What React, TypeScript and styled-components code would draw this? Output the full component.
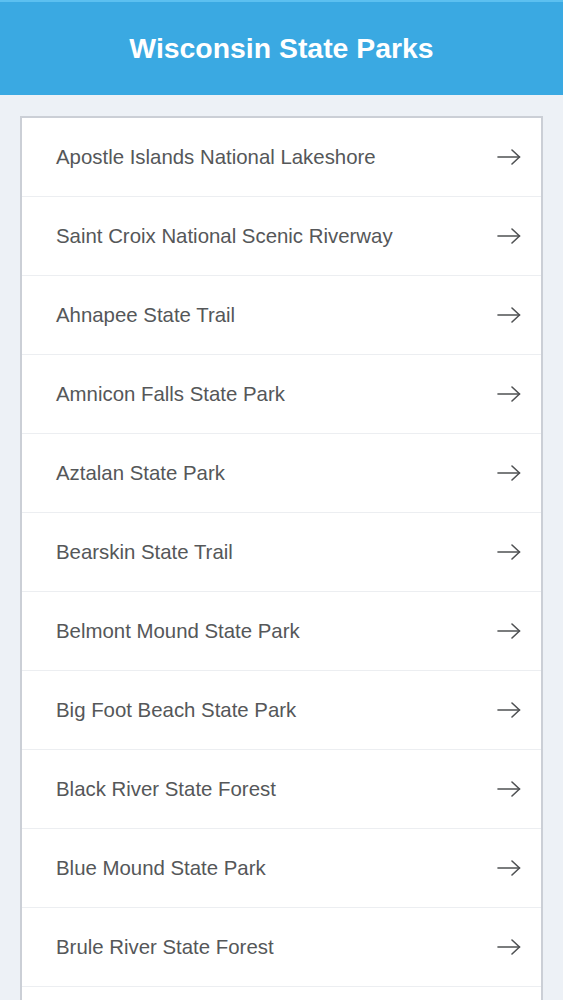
import React from 'react';
import styled, { createGlobalStyle } from 'styled-components';

const GlobalStyle = createGlobalStyle`
  html, body {
    margin: 0;
    padding: 0;
    background: #edf1f6;
    font-family: "Liberation Sans", Arial, Helvetica, sans-serif;
  }
`;

const Page = styled.div`
  height: 1000px;
  overflow: hidden;
  background: #edf1f6;
`;

const Header = styled.header`
  height: 95px;
  background: #3aa9e2;
  border-top: 2px solid #5cc0f0;
  box-sizing: border-box;
  display: flex;
  align-items: center;
  justify-content: center;
`;

const Title = styled.h1`
  margin: 0;
  color: #ffffff;
  font-size: 28.4px;
  font-weight: 700;
`;

const Card = styled.ul`
  list-style: none;
  margin: 21px 20px 0 20px;
  padding: 0 0 60px 0;
  background: #ffffff;
  border: 2px solid #cbcfd6;
  border-bottom: none;
`;

const Row = styled.li`
  height: 79px;
  box-sizing: border-box;
  display: flex;
  align-items: center;
  justify-content: space-between;
  padding: 0 20px 0 34px;
  border-bottom: 1px solid #eceef1;
  color: #555759;
  font-size: 20.4px;
`;

const Arrow = () => (
  <svg width="24" height="16" viewBox="0 0 24 16" fill="none" stroke="#4f5153" strokeWidth="1.6" strokeLinecap="round" strokeLinejoin="round">
    <line x1="1" y1="8" x2="22.5" y2="8" />
    <polyline points="15,1 22.5,8 15,15" />
  </svg>
);

const parks = [
  'Apostle Islands National Lakeshore',
  'Saint Croix National Scenic Riverway',
  'Ahnapee State Trail',
  'Amnicon Falls State Park',
  'Aztalan State Park',
  'Bearskin State Trail',
  'Belmont Mound State Park',
  'Big Foot Beach State Park',
  'Black River State Forest',
  'Blue Mound State Park',
  'Brule River State Forest',
];

const App = () => (
  <>
    <GlobalStyle />
    <Page>
      <Header>
        <Title>Wisconsin State Parks</Title>
      </Header>
      <Card>
        {parks.map((name) => (
          <Row key={name}>
            <span>{name}</span>
            <Arrow />
          </Row>
        ))}
      </Card>
    </Page>
  </>
);

export default App;
